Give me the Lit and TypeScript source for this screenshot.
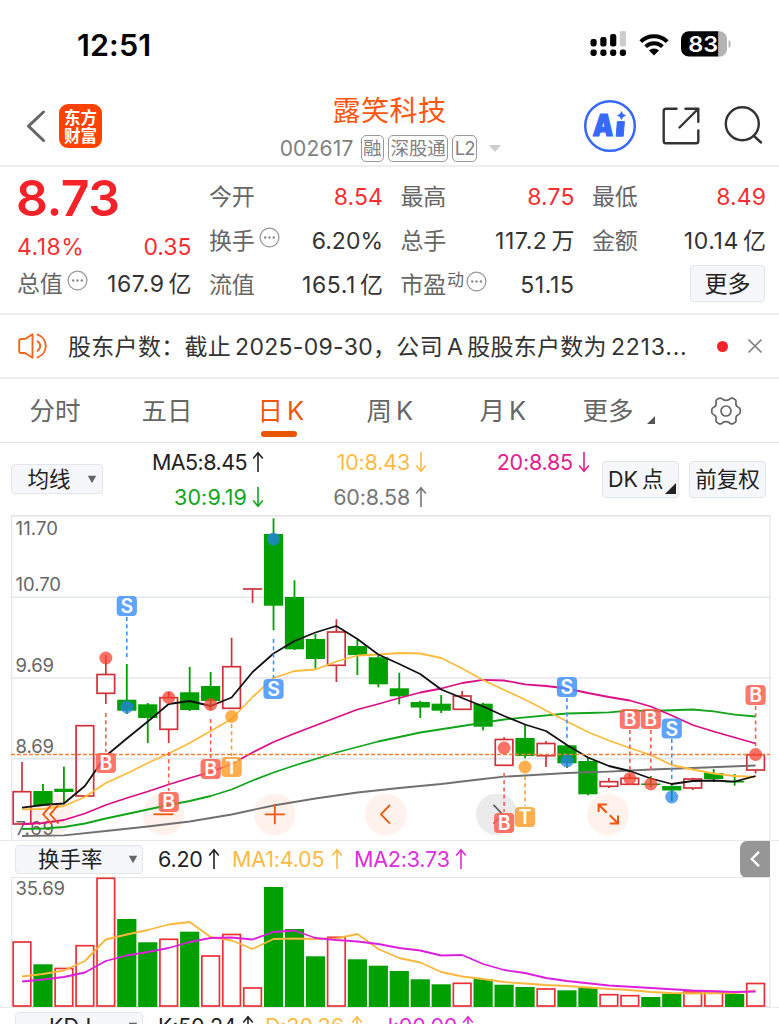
import { LitElement, html, svg, css } from "lit";
import { customElement, property } from "lit/decorators.js";

type Candle = { up: boolean; top: number; bottom: number; high: number; low: number };

const STEP = 20.96;
const X0 = 22;
const cx = (i: number) => X0 + i * STEP;

const c = (kind: string, top: number, bottom: number, high: number, low: number): Candle => ({
  up: kind === "r", top, bottom, high, low,
});

const CANDLES: Candle[] = [
  c("r", 791.7, 824, 762, 824), c("g", 791, 805, 784, 805), c("g", 788.7, 792, 766.7, 804),
  c("r", 725.7, 796, 725.7, 796), c("r", 674.5, 693.3, 655, 704), c("g", 699.7, 710.7, 664, 714),
  c("g", 704.3, 718, 703, 743), c("r", 697.7, 729.3, 692, 743), c("g", 692.3, 710, 667, 711),
  c("g", 686, 701, 672, 710), c("r", 666.7, 708.3, 637.7, 708.3), c("r", 589, 589, 589, 603),
  c("g", 534, 605.7, 518.3, 630.3), c("g", 597, 649.3, 580.3, 650), c("g", 639, 659, 634, 668.7),
  c("r", 632, 665.3, 619.3, 682), c("g", 646, 655, 640, 675), c("g", 657.3, 684.3, 654.7, 687.3),
  c("g", 688.3, 696.3, 672.7, 704.3), c("g", 702, 707.5, 700.7, 718), c("g", 703.7, 710.7, 695, 713),
  c("r", 696, 709.3, 691, 709.3), c("g", 703.7, 726.7, 702.7, 730.3), c("r", 739.5, 765.3, 737.3, 765.3),
  c("g", 738, 756, 724.3, 758.3), c("r", 743.5, 755.7, 741, 767), c("g", 745.3, 763.3, 745.3, 768),
  c("g", 761, 794.3, 758, 795.3), c("r", 781.7, 786.3, 778, 788), c("r", 778.3, 784.3, 774, 785),
  c("g", 783.5, 785, 776, 787), c("g", 786, 790.5, 784, 801), c("r", 779, 788, 777.7, 790),
  c("g", 773, 779, 769, 782), c("g", 781, 782.5, 774, 785.7), c("r", 754.7, 770, 754.7, 773.5),
];

const LINES: { color: string; pts: number[][] }[] = [
  { color: "#707070", pts: [[0, 836], [2, 835.3], [4, 831], [6, 826.5], [8, 821.5], [10, 814.5], [12, 805.5], [14, 798.5], [16, 792.5], [18, 788], [20, 784], [22, 779], [23, 776.7], [24, 775.5], [26, 773], [28, 771.7], [30, 769.5], [32, 768], [35, 765.5]] },
  { color: "#12a51c", pts: [[0, 829], [1, 828.5], [2, 827], [3, 823.5], [4, 818.5], [5, 814], [6, 809.5], [7, 805], [8, 801], [9, 796], [10, 789.5], [11, 780.5], [12, 772.5], [13, 765.5], [15, 752.5], [17, 741.5], [19, 732.5], [21, 726], [23, 719.5], [24, 717.3], [26, 713.5], [27, 713], [28, 712.3], [29, 710.7], [30, 711], [32, 709.5], [33, 711.3], [34, 714.7], [35, 716.5]] },
  { color: "#db0f87", pts: [[0, 824], [1, 823], [2, 820], [3, 813.5], [4, 805], [5, 798], [6, 791.5], [7, 784.5], [8, 778], [9, 772], [10, 764], [11, 752.5], [12, 742], [13, 733.5], [14, 725.5], [15, 717.5], [16, 709.5], [17, 704], [18, 698], [19, 692.5], [20, 688.5], [21, 683], [22, 679.8], [23, 680.5], [24, 684.3], [25, 686], [26, 688.5], [27, 693], [28, 697], [29, 700.5], [30, 706.5], [31, 715.5], [32, 725], [33, 731.5], [34, 737.5], [35, 743.5]] },
  { color: "#ffbb3d", pts: [[0, 809.3], [1, 809], [2, 806], [3, 797], [4, 783], [5, 773.5], [6, 763], [7, 753.5], [8, 743], [9, 731], [10, 719], [11, 697], [12, 678], [13, 671], [14, 669.5], [15, 661.5], [16, 655.5], [17, 654.5], [18, 653], [19, 653.5], [20, 658], [21, 668.5], [22, 680], [23, 690], [24, 699.5], [25, 710.5], [26, 721.5], [27, 732], [28, 740.5], [29, 748], [30, 755], [31, 765], [32, 769.5], [33, 773.5], [34, 776], [35, 777]] },
  { color: "#111", pts: [[0, 807.7], [1, 805], [2, 803.5], [3, 786], [4, 756], [5, 738.5], [6, 721.5], [7, 704], [8, 701], [9, 706], [10, 697.5], [11, 672], [12, 653.5], [13, 641], [14, 632.5], [15, 626], [16, 639], [17, 654.5], [18, 664], [19, 674], [20, 689.5], [21, 698], [22, 706.5], [23, 716], [24, 724.5], [25, 731], [26, 745], [27, 757.5], [28, 766], [29, 771], [30, 778.5], [31, 784], [32, 781], [33, 780.5], [34, 781.7], [35, 776]] },
];

/** index, badge letter, badge y, dash start, dash end, dot y */
const MARKS: [number, string, number, number, number, number][] = [
  [4, "B", 763, 713, 752, 658], [5, "S", 606, 617, 657, 707], [7, "B", 802, 752, 791, 697.5],
  [9, "B", 769, 719, 758, 704.5], [10, "T", 767, 724, 756, 716.5], [12, "S", 689, 639, 678, 539],
  [23, "B", 823, 773, 812, 748], [24, "T", 817, 776, 806, 767], [26, "S", 687, 698, 738, 761],
  [29, "B", 719, 730, 770, 778.5], [30, "B", 719, 730, 770, 784], [31, "S", 728.5, 739, 779, 797],
  [35, "B", 695, 706, 748, 754.5],
];
const MARK_COLOR: Record<string, [string, string]> = {
  B: ["#ff5c4d", "#f9402f"], S: ["#3f91ff", "#2383f0"], T: ["#ff9f2d", "#ff9412"],
};

const BARS: [string, number][] = [
  ["r", 942], ["g", 964.3], ["r", 968.5], ["r", 945.7], ["r", 878.3], ["g", 919], ["g", 942.3], ["r", 939.3], ["g", 931.7],
  ["r", 956], ["r", 934.5], ["r", 988], ["g", 887], ["g", 929], ["g", 956.3], ["r", 937.3], ["g", 959.3], ["g", 965.7],
  ["g", 971], ["g", 979.3], ["g", 984.3], ["r", 983.3], ["g", 979], ["g", 984.7], ["g", 987], ["r", 989], ["g", 990.3],
  ["g", 987.7], ["r", 994.7], ["r", 995.7], ["g", 997], ["g", 993.7], ["r", 992], ["r", 991.7], ["g", 994], ["r", 983.5],
];
const TURN_LINES: { color: string; pts: number[][] }[] = [
  { color: "#fdb53c", pts: [[0, 976.5], [1, 974], [2, 970.5], [3, 961], [4, 939.5], [5, 934.5], [6, 930], [7, 924.5], [8, 922], [9, 937], [10, 940.5], [11, 949], [12, 939], [13, 938.5], [14, 939], [15, 938.5], [16, 934], [17, 949], [18, 958], [19, 962.5], [20, 972], [21, 976.5], [22, 979], [23, 982], [24, 983.5], [25, 985], [26, 986], [27, 987.5], [28, 989], [29, 990], [30, 992], [31, 993], [32, 993.5], [34, 993], [35, 990.5]] },
  { color: "#dd1edd", pts: [[0, 981.5], [1, 979.5], [2, 977], [3, 972.5], [4, 961], [5, 955.5], [6, 952], [7, 948], [8, 942], [9, 938], [10, 937.5], [11, 939.5], [12, 932], [13, 930.5], [14, 938], [15, 940], [16, 941.5], [17, 944], [18, 948], [19, 950.5], [20, 955.5], [21, 955], [22, 964], [23, 970], [24, 973], [25, 978], [26, 981], [28, 985.5], [30, 988], [32, 990.5], [34, 992], [35, 991.5]] },
];

const path = (pts: number[][]) => pts.map(([i, y]) => `${cx(i).toFixed(1)},${y}`).join(" ");

const arrow = (up: boolean) => html`<svg class="arrow" width="12" height="22" viewBox="0 0 12 22" fill="none" stroke="currentColor" stroke-width="1.6">
  ${up ? svg`<path d="M6 21V2M1.2 7.4L6 1.8l4.8 5.6"/>` : svg`<path d="M6 1v19M1.2 14.6L6 20.2l4.8-5.6"/>`}
</svg>`;

const dots = html`<svg class="dots" width="21" height="21" viewBox="0 0 21 21"><circle cx="10.5" cy="10.5" r="9.4" fill="none" stroke="#999" stroke-width="1.3"/><g fill="#888"><circle cx="6.2" cy="10.5" r="1.2"/><circle cx="10.5" cy="10.5" r="1.2"/><circle cx="14.8" cy="10.5" r="1.2"/></g></svg>`;

const FONT = css`
  :host { font-family: "Inter", "Noto Sans CJK SC", sans-serif; }
  svg { display: block; flex: none; }
`;

@customElement("k-chart")
export class KChart extends LitElement {
  static styles = [FONT, css`
    :host { display: block; height: 325px; }
    .axis { font-size: 18.5px; fill: #666; }
    .mark { font-size: 19.5px; font-weight: 600; fill: #fff; text-anchor: middle; }
  `];

  render() {
    return html`<svg width="779" height="325" viewBox="0 515 779 325">
      <g stroke="#e4e6ee" stroke-width="1.6">
        <path d="M11 515.8H770" stroke="#e3e3e5"/><path d="M11 597.2H770M11 678H770M11 758.6H770"/>
        <path d="M11.6 515V840M770 515V840" stroke="#e6e6ea" stroke-width="1.3"/>
      </g>
      <g fill="#fff1eb">
        ${[52.5, 163.5, 274.6, 385.7, 607.9].map((x) => svg`<circle cx=${x} cy="814.3" r="20.8"/>`)}
        <circle cx="496.8" cy="814.3" r="20.8" fill="#ebebeb"/>
      </g>
      <g>
        ${["11.70", "10.70", "9.69", "8.69", "7.69"].map((t, i) => svg`<text class="axis" x="15.5" y=${[535, 590.8, 672, 753, 834.5][i]} textLength=${i < 2 ? (i ? 45.5 : 42.5) : 38.5}>${t}</text>`)}
      </g>
      ${CANDLES.map((k, i) => {
        const x = cx(i);
        if (!k.up) {
          return svg`<g fill="#00a000"><rect x=${x - 0.9} y=${k.high} width="1.8" height=${k.low - k.high}/><rect x=${x - 9.6} y=${k.top} width="19.2" height=${k.bottom - k.top}/></g>`;
        }
        const wick = `M${x} ${k.high}V${k.top}M${x} ${k.bottom}V${k.low}`;
        return svg`<g fill="none" stroke="#d2303a" stroke-width="1.7"><path d=${wick}/>${k.top === k.bottom
          ? svg`<path d=${`M${x - 9.6} ${k.top}h19.2`}/>`
          : svg`<rect x=${x - 8.8} y=${k.top} width="17.6" height=${k.bottom - k.top}/>`}</g>`;
      })}
      ${LINES.map((l) => svg`<polyline points=${path(l.pts)} fill="none" stroke=${l.color} stroke-width="1.8" stroke-linejoin="round"/>`)}
      <path d="M11 754.6H770" stroke="#f5813a" stroke-width="1.5" stroke-dasharray="4 2"/>
      <g fill="none" stroke="#f0560c" stroke-width="1.8">
        <path d="M51.5 804.5L43.2 814.3l8.3 9.4M58.5 804.5L50.2 814.3l8.3 9.4"/>
        <path d="M153.5 814.3h20"/>
        <path d="M264.8 814.3h20M274.8 804.3v20"/>
        <path d="M390 804.8L381 814.3l9 9.3"/>
        <path d="M493.5 804.8l9 9.5-9 9.3" stroke="#666"/>
        <path d="M598.6 812V804.6h8.2M598.8 804.8l8 8M618 815.5v7.9h-8.2M617.8 823.2l-8-8" stroke-width="2"/>
      </g>
      ${MARKS.map(([i, t, y, d1, d2, dot]) => {
        const x = cx(i);
        const [fill, deep] = MARK_COLOR[t];
        return svg`<g>
          <path d=${`M${x} ${d1}V${d2}`} stroke=${fill} stroke-width="1.6" stroke-dasharray="4 3.2"/>
          <circle cx=${x} cy=${dot} r="6.5" fill=${deep} opacity="0.74"/>
          <rect x=${x - 10.1} y=${y - 10.1} width="20.2" height="20.2" rx="4" fill=${fill} opacity="0.84"/>
          <text class="mark" x=${x} y=${y + 7.1}>${t}</text></g>`;
      })}
    </svg>`;
  }
}

@customElement("turnover-chart")
export class TurnoverChart extends LitElement {
  static styles = [FONT, css`
    :host { display: block; height: 130px; }
    .axis { font-size: 18.5px; fill: #666; }
  `];

  render() {
    return html`<svg width="779" height="130" viewBox="0 877 779 130">
      <path d="M11 877.4H770M11.6 877V1007M770 877V1007M11 1006.6H770" fill="none" stroke="#e6e6ea" stroke-width="1.3"/>
      <text class="axis" x="15.5" y="895" textLength="49.5">35.69</text>
      ${BARS.map(([k, y], i) => k === "g"
        ? svg`<rect x=${cx(i) - 9.6} y=${y} width="19.2" height=${1007 - y} fill="#00a000"/>`
        : svg`<rect x=${cx(i) - 8.8} y=${y} width="17.6" height=${1006 - y} fill="none" stroke="#ec3036" stroke-width="1.7"/>`)}
      ${TURN_LINES.map((l) => svg`<polyline points=${path(l.pts)} fill="none" stroke=${l.color} stroke-width="1.8" stroke-linejoin="round"/>`)}
    </svg>`;
  }
}

@customElement("quote-cell")
export class QuoteCell extends LitElement {
  @property() label = "";
  @property() value = "";
  @property() unit = "";
  @property() sup = "";
  @property({ type: Boolean }) info = false;
  @property({ type: Boolean }) rise = false;

  static styles = [FONT, css`
    :host { display: flex; justify-content: space-between; align-items: center; height: 44px; line-height: 44px; font-size: 23px; white-space: nowrap; }
    .label { display: flex; color: #666; letter-spacing: -0.3px; }
    .dots { margin: 8px 0 0 5px; }
    .sup { font-size: 17px; line-height: 34px; margin-left: 1px; }
    .sup + .dots { margin-left: 2px; }
    .value { color: #333; display: flex; align-items: baseline; gap: 4px; letter-spacing: 0; margin-right: -1px; }
    .wide { letter-spacing: 0.6px; }
    .rise { color: #f52f32; letter-spacing: 0.1px; }
  `];

  render() {
    return html`<span class="label">${this.label}${this.sup ? html`<span class="sup">${this.sup}</span>` : ""}${this.info ? dots : ""}</span>
      <span class="value ${this.rise ? "rise" : ""}"><span class=${this.value.includes("1") ? "wide" : ""}>${this.value}</span>${this.unit ? html`<span>${this.unit}</span>` : ""}</span>`;
  }
}

@customElement("app-root")
export class AppRoot extends LitElement {
  static styles = [FONT, css`
    :host { display: block; width: 779px; height: 1024px; overflow: hidden; background: #fff; color: #333; }
    * { box-sizing: border-box; }
    .status { height: 88px; display: flex; justify-content: space-between; align-items: flex-start; padding: 25px 48px 0 77px; }
    .clock { font-size: 30.5px; font-weight: 600; line-height: 40px; color: #000; letter-spacing: 0.1px; }
    .sys { display: flex; align-items: center; height: 38px; }
    .wifi { margin: 0 12px; }
    .header { height: 79px; display: flex; align-items: center; padding: 0 16px 2px 26px; border-bottom: 2px solid #eee; justify-content: space-between; }
    .left, .right { display: flex; align-items: center; width: 196px; }
    .right { width: 180px; justify-content: space-between; }
    .logo { width: 43px; height: 44px; margin-left: 13px; border-radius: 9px; background: #ff4200; color: #fff; font-size: 16.5px; font-weight: 700; line-height: 18px; text-align: center; padding-top: 4px; font-family: "Noto Sans CJK SC", sans-serif; }
    .center { display: flex; flex-direction: column; align-items: center; margin-top: 8px; margin-left: -24px; flex: 1; }
    .name { font-size: 28.2px; line-height: 38px; letter-spacing: 0.3px; color: #ff560f; margin-left: -2px; }
    .code { display: flex; align-items: center; height: 38px; gap: 4px; font-size: 21px; color: #808080; white-space: nowrap; }
    .digits { letter-spacing: 0.2px; margin-right: 3px; }
    .tag { height: 27px; border: 1.5px solid #999; border-radius: 5px; line-height: 24px; font-size: 18.5px; padding: 0 1.5px; letter-spacing: -0.1px; }
    .l2 { letter-spacing: -0.8px; }
    .tri { margin-left: 8px; }
    .quote { height: 148px; display: flex; padding: 7px 14px 0 18px; border-bottom: 2px solid #eee; gap: 18.5px; }
    .first { width: 172.5px; display: flex; flex-direction: column; }
    .price { font-size: 50px; font-weight: 600; color: #f5222a; line-height: 49px; height: 50px; letter-spacing: -0.5px; margin-left: -2px; }
    .change { display: flex; justify-content: space-between; color: #f52f32; font-size: 23px; line-height: 46px; height: 38px; letter-spacing: 0; margin-right: -1px; }
    .pct { letter-spacing: 0.5px; margin-left: -1px; }
    .first quote-cell { margin-left: -1px; height: 43px; }
    .cells { width: 173px; display: flex; flex-direction: column; margin-top: 0.5px; }
    .btn { border: 1.5px solid #e2e5ec; border-radius: 4px; background: #f6f7fa; color: #222; text-align: center; }
    .more { width: 75px; height: 37px; line-height: 36px; font-size: 23px; align-self: flex-end; margin-top: 2px; }
    .notice { height: 64px; display: flex; align-items: center; padding: 0 16px 0 18px; border-bottom: 2px solid #eee; font-size: 23px; white-space: nowrap; }
    .news { margin-left: 18px; width: 649px; flex: none; display: flex; align-items: baseline; gap: 4px; margin-top: -2px; letter-spacing: 0.3px; }
    .count { letter-spacing: 0.8px; }
    .red { width: 11px; height: 11px; border-radius: 50%; background: #f5222a; margin: 0 20px 0 0; flex: none; }
    .tabs { height: 64px; display: grid; grid-template-columns: 112px 116px 109px 113px 103px 127px 40px; padding-left: 29.5px; border-bottom: 1.5px solid #dfe1ea; font-size: 25.5px; line-height: 63px; color: #666; }
    .tab { display: flex; gap: 4px; position: relative; }
    .on { color: #f0560c; }
    .on::after { content: ""; position: absolute; left: 3.5px; top: 52px; width: 36px; height: 6px; border-radius: 3px; background: #ea5504; }
    .corner { margin: 37px 0 0 9px; }
    .gear { align-self: center; }
    .ma { height: 72px; display: flex; padding: 0 12px 0 11px; }
    .sel { display: flex; align-items: center; justify-content: space-between; font-size: 21.5px; line-height: 27px; }
    .avg { width: 92px; height: 30px; margin-top: 21px; padding: 0 5px 0 15.5px; }
    .vals { display: grid; grid-template-columns: 161px 163px 163px; grid-auto-rows: 35px; height: 72px; padding-top: 1px; }
    .v { display: flex; align-items: center; justify-content: flex-end; gap: 5px; font-size: 21.5px; letter-spacing: -0.2px; }
    .ma5 { letter-spacing: -0.55px; } .ma30 { letter-spacing: 0.1px; }
    .k { color: #222; } .y { color: #fdbb45; } .p { color: #e0218f; } .g { color: #12a51c; } .s { color: #777; } .m { color: #dd2ddd; }
    .dk { width: 77px; height: 37px; margin: 17.5px 10px 0 12px; font-size: 21.5px; line-height: 34px; display: flex; padding-left: 5px; gap: 4px; white-space: nowrap; }
    .dk-tri { margin: 21px 0 0 -2px; }
    .fq { width: 77px; height: 37px; margin-top: 17.5px; font-size: 21.5px; line-height: 34px; white-space: nowrap; }
    .row { height: 37px; display: flex; align-items: center; padding-left: 15px; border-top: 1.5px solid #e9e9ed; font-size: 21.5px; }
    .ind { width: 128px; height: 29px; padding: 0 4px 0 22px; margin-right: 15px; }
    .kdj { padding-left: 33px; }
    .row .v { justify-content: space-between; }
    .w1 { width: 62px; margin-right: 12px; } .w2 { width: 111px; margin-right: 11px; } .w3 { width: 113px; }
    .w4 { width: 96px; margin-right: 11px; } .w5 { width: 98px; margin-right: 18px; } .w6 { width: 87px; }
    .fold { width: 30px; height: 37px; margin: 0 9px 0 auto; border-radius: 7px 0 0 7px; background: #969696; display: flex; align-items: center; justify-content: center; }
  `];

  render() {
    const caret = html`<svg width="10" height="9" viewBox="0 0 10 9"><path d="M0.8 0.8h8.4L5 8.2z" fill="#666"/></svg>`;
    return html`
      <div class="status">
        <span class="clock">12:51</span>
        <div class="sys">
          <svg width="37" height="26" viewBox="0 0 37 26">
            <rect x="0.5" y="8" width="6.2" height="7.5" rx="2.4"/><rect x="10.3" y="6" width="6.2" height="9.5" rx="2.2"/>
            <rect x="20.1" y="3" width="6.2" height="12.5" rx="2.2"/><rect x="29.8" y="0" width="6.2" height="15.5" rx="1.8" fill="#ccc"/>
            <rect x="0.5" y="18.4" width="6.2" height="6.6" rx="2.4"/><rect x="10.3" y="18.4" width="6.2" height="6.6" rx="2.4"/>
            <rect x="20.1" y="18.4" width="6.2" height="6.6" rx="2.4"/><rect x="29.8" y="18.4" width="6.2" height="6.6" rx="2.4"/>
          </svg>
          <svg class="wifi" width="30" height="23" viewBox="0 0 30 23" fill="none" stroke="#000">
            <path d="M1.8 8.600a19 19 0 0 1 26.400 0" stroke-width="4"/><path d="M6.600 13.700a12 12 0 0 1 16.800 0" stroke-width="3.800"/>
            <path d="M15 22.600l-5-5.200a7.200 7.200 0 0 1 10 0z" fill="#000" stroke="none"/>
          </svg>
          <svg width="50" height="26" viewBox="0 0 50 26">
            <path d="M8 .2H37.500V25.600H8a8 8 0 0 1-8-8V8.200a8 8 0 0 1 8-8z"/><path d="M37.500 .2h1a7.500 7.500 0 0 1 7.500 7.500v10.400a7.500 7.500 0 0 1-7.500 7.500h-1z" fill="#b3b3b3"/>
            <path d="M47.600 9c2.700 1.200 2.700 6.800 0 8z" fill="#b3b3b3"/>
            <text x="7.300" y="20.800" font-size="22" font-weight="600" fill="#fff" textLength="30" lengthAdjust="spacingAndGlyphs">83</text>
          </svg>
        </div>
      </div>

      <div class="header">
        <div class="left">
          <svg width="20" height="34" viewBox="0 0 20 34" fill="none" stroke="#666" stroke-width="3" stroke-linecap="round" stroke-linejoin="round"><path d="M17.500 3L2.500 17.200l15 14.300"/></svg>
          <div class="logo">东方<br />财富</div>
        </div>
        <div class="center">
          <div class="name">露笑科技</div>
          <div class="code"><span class="digits">002617</span><span class="tag">融</span><span class="tag">深股通</span><span class="tag l2">L2</span>
            <svg class="tri" width="12" height="7" viewBox="0 0 12 7"><path d="M0 0h12L6 7z" fill="#ccc"/></svg></div>
        </div>
        <div class="right">
          <svg width="54" height="54" viewBox="0 0 54 54">
            <circle cx="27" cy="27" r="24.800" fill="none" stroke="#3668fa" stroke-width="2.500"/>
            <text x="9.500" y="37" font-size="30" font-weight="900" fill="#3668fa" stroke="#3668fa" stroke-width="1.200" textLength="20.500" lengthAdjust="spacingAndGlyphs" transform="skewX(-3) translate(2 0)">A</text>
            <path d="M34.400 22.600h7l-1.200 14.600h-7z" fill="#3668fa" stroke="#3668fa" stroke-linejoin="round"/>
            <path d="M38.500 12.500q.8 3.200 4 4-3.200.8-4 4-.8-3.200-4-4 3.200-.8 4-4z" fill="#3668fa" stroke="#3668fa" stroke-width=".6"/>
          </svg>
          <svg width="38" height="38" viewBox="0 0 38 38" fill="none" stroke="#333" stroke-width="2.400" stroke-linecap="round" stroke-linejoin="round">
            <path d="M14.500 1.700H4a2.300 2.300 0 0 0-2.300 2.300v30a2.300 2.300 0 0 0 2.300 2.300h30a2.300 2.300 0 0 0 2.300-2.300V23.500M23.500 1.700h12.800v13M35.500 2.500L17.500 20.500"/>
          </svg>
          <svg width="39" height="39" viewBox="0 0 39 39" fill="none" stroke="#333" stroke-width="2.400" stroke-linecap="round"><circle cx="18.300" cy="17.800" r="16.500"/><path d="M30 30l7 6.500"/></svg>
        </div>
      </div>

      <div class="quote">
        <div class="first">
          <div class="price">8.73</div>
          <div class="change"><span class="pct">4.18%</span><span>0.35</span></div>
          <quote-cell label="总值" info value="167.9" unit="亿"></quote-cell>
        </div>
        <div class="cells">
          <quote-cell label="今开" value="8.54" rise></quote-cell>
          <quote-cell label="换手" info value="6.20%"></quote-cell>
          <quote-cell label="流值" value="165.1" unit="亿"></quote-cell>
        </div>
        <div class="cells">
          <quote-cell label="最高" value="8.75" rise></quote-cell>
          <quote-cell label="总手" value="117.2" unit="万"></quote-cell>
          <quote-cell label="市盈" sup="动" info value="51.15"></quote-cell>
        </div>
        <div class="cells">
          <quote-cell label="最低" value="8.49" rise></quote-cell>
          <quote-cell label="金额" value="10.14" unit="亿"></quote-cell>
          <div class="btn more">更多</div>
        </div>
      </div>

      <div class="notice">
        <svg width="32" height="26" viewBox="0 0 32 26" fill="none" stroke="#f0661e" stroke-width="1.900" stroke-linejoin="round" stroke-linecap="round">
          <path d="M14.500 1.200v23.600L7 20H3a1.800 1.800 0 0 1-1.800-1.800V7.800A1.800 1.800 0 0 1 3 6h4z"/><path d="M19.500 8.200a5.600 5.600 0 0 1 0 9.600"/><path d="M19.500 1.600a12 12 0 0 1 0 22.800"/>
        </svg>
        <div class="news"><span>股东户数：截止</span><span>2025-09-30，公司</span><span>A</span><span>股股东户数为</span><span class="count">2213...</span></div>
        <span class="red"></span>
        <svg width="14" height="14" viewBox="0 0 14 14" stroke="#888" stroke-width="1.700"><path d="M.5.5l13 13M13.500.5l-13 13"/></svg>
      </div>

      <div class="tabs">
        <span class="tab">分时</span><span class="tab">五日</span>
        <span class="tab on"><span>日</span><span>K</span></span>
        <span class="tab"><span>周</span><span>K</span></span>
        <span class="tab"><span>月</span><span>K</span></span>
        <span class="tab">更多<svg class="corner" width="8" height="8" viewBox="0 0 8 8"><path d="M8 0v8H0z" fill="#555"/></svg></span>
        <svg class="gear" width="32" height="30" viewBox="-16 -15 32 30" fill="none" stroke="#666" stroke-width="1.700" stroke-linejoin="round">
          <circle r="5"/>
          <path d="M-7.200-12.600Q-4.800-13.600-3.200-11.600Q0-9.800 3.200-11.600Q4.800-13.600 7.200-12.600L9.600-11Q10.600-9.800 9.800-8.200Q9.800-4.600 12.200-3.800Q14.200-3.200 14.200-1.200V1.200Q14.200 3.200 12.200 3.800Q9.800 4.600 9.800 8.200Q10.600 9.800 9.600 11L7.200 12.600Q4.800 13.600 3.200 11.600Q0 9.800-3.200 11.600Q-4.800 13.600-7.200 12.600L-9.600 11Q-10.600 9.800-9.800 8.200Q-9.800 4.600-12.200 3.800Q-14.200 3.200-14.200 1.200V-1.200Q-14.200-3.200-12.200-3.800Q-9.800-4.600-9.800-8.200Q-10.600-9.800-9.600-11Z"/>
        </svg>
      </div>

      <div class="ma">
        <div class="btn sel avg"><span>均线</span>${caret}</div>
        <div class="vals">
          <span class="v k ma5">MA5:8.45${arrow(true)}</span><span class="v y">10:8.43${arrow(false)}</span><span class="v p">20:8.85${arrow(false)}</span>
          <span class="v g ma30">30:9.19${arrow(false)}</span><span class="v s">60:8.58${arrow(true)}</span>
        </div>
        <div class="btn dk"><span>DK</span><span>点</span><svg class="dk-tri" width="11" height="11" viewBox="0 0 11 11"><path d="M11 0v11H0z" fill="#222"/></svg></div>
        <div class="btn fq">前复权</div>
      </div>

      <k-chart></k-chart>

      <div class="row">
        <div class="btn sel ind"><span>换手率</span>${caret}</div>
        <span class="v k w1">6.20${arrow(true)}</span><span class="v y w2">MA1:4.05${arrow(true)}</span><span class="v m w3">MA2:3.73${arrow(true)}</span>
        <div class="fold"><svg width="10" height="16" viewBox="0 0 10 16" fill="none" stroke="#fff" stroke-width="2.400"><path d="M9 .8L1.800 8 9 15.200"/></svg></div>
      </div>

      <turnover-chart></turnover-chart>

      <div class="row">
        <div class="btn sel ind kdj"><span>KDJ</span>${caret}</div>
        <span class="v k w4">K:50.24${arrow(true)}</span><span class="v y w5">D:30.36${arrow(true)}</span><span class="v m w6">J:90.00${arrow(true)}</span>
      </div>
    `;
  }
}
